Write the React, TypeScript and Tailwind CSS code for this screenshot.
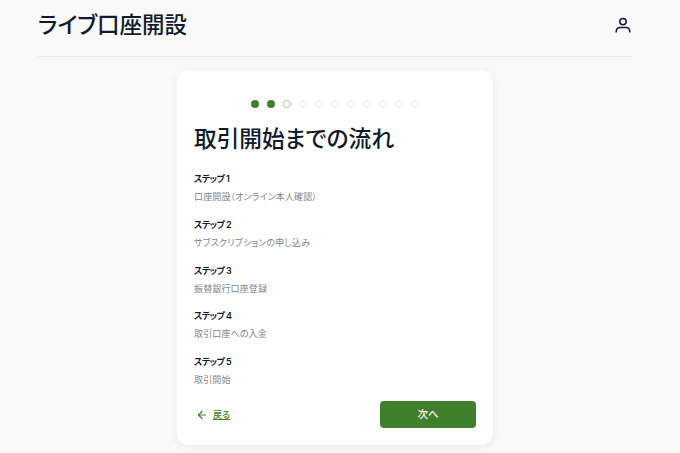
import React from "react";
import { ArrowLeft } from "lucide-react";

const FONT = "font-['Inter','Noto_Sans_CJK_JP',sans-serif]";
const PALT = "[font-feature-settings:'palt']";

const steps = [
  { label: "ステップ 1", text: "口座開設（オンライン本人確認）" },
  { label: "ステップ 2", text: "サブスクリプションの申し込み" },
  { label: "ステップ 3", text: "振替銀行口座登録" },
  { label: "ステップ 4", text: "取引口座への入金" },
  { label: "ステップ 5", text: "取引開始" },
];

function Dot({ state }: { state: "done" | "current" | "todo" }) {
  if (state === "done") {
    return <span className="h-2 w-2 rounded-full bg-[#40802c]" />;
  }
  if (state === "current") {
    return <span className="h-2 w-2 rounded-full border border-[#a3c796] bg-white" />;
  }
  return <span className="h-2 w-2 rounded-full border border-[#e8e8e8] bg-white" />;
}

export default function App() {
  return (
    <div className={`h-[453px] overflow-hidden bg-[#f9f9f9] pl-[38px] pr-[48px] ${FONT} ${PALT}`}>
      {/* Header */}
      <header className="flex h-[57px] items-center justify-between border-b border-[#e9e9e9]">
        <h1 className="-mt-[7px] text-[22.5px] leading-8 font-medium text-[#0f1b2d]">ライブ口座開設</h1>
        <svg
          className="mr-[1px] -mt-[7px]"
          width="16"
          height="16"
          viewBox="0 0 16 16"
          fill="none"
          stroke="#0f1b2d"
          strokeWidth="1.5"
        >
          <circle cx="8" cy="4.6" r="3.2" />
          <path d="M1.2 15.6v-.9c0-2.5 1.8-4.2 4.2-4.2h5.2c2.4 0 4.2 1.7 4.2 4.2v.9" />
        </svg>
      </header>

      {/* Card */}
      <main className="mt-[13px] flex justify-center">
        <div className="flex h-[375px] w-[316px] flex-col rounded-xl bg-white px-[17px] pt-[30px] shadow-[0_2px_8px_rgba(0,0,0,0.06)]">
          <div className="flex justify-center gap-2">
            <Dot state="done" />
            <Dot state="done" />
            <Dot state="current" />
            {Array.from({ length: 8 }).map((_, i) => (
              <Dot key={i} state="todo" />
            ))}
          </div>

          <h2 className="mt-[15px] text-[22.7px] leading-8 font-medium text-[#0f1b2d]">取引開始までの流れ</h2>

          <div className="mt-[16px] flex flex-col gap-[13.75px]">
            {steps.map((s) => (
              <div key={s.label}>
                <p className="text-[9px] leading-[15px] font-semibold tracking-[-0.6px] text-[#0f1b2d]">{s.label}</p>
                <p className="mt-[5px] text-[9px] leading-[12px] tracking-[0.13px] text-[#7f858c]">{s.text}</p>
              </div>
            ))}
          </div>

          <div className="mt-[15px] flex items-center justify-between">
            <a className="ml-[2px] flex items-center gap-[5px] text-[9px] font-medium text-[#40802c] underline">
              <ArrowLeft size={12} strokeWidth={2.4} />
              戻る
            </a>
            <button className="h-[27px] w-[96px] rounded-sm bg-[#40802c] text-[10.5px] font-medium text-white">
              次へ
            </button>
          </div>
        </div>
      </main>
    </div>
  );
}
